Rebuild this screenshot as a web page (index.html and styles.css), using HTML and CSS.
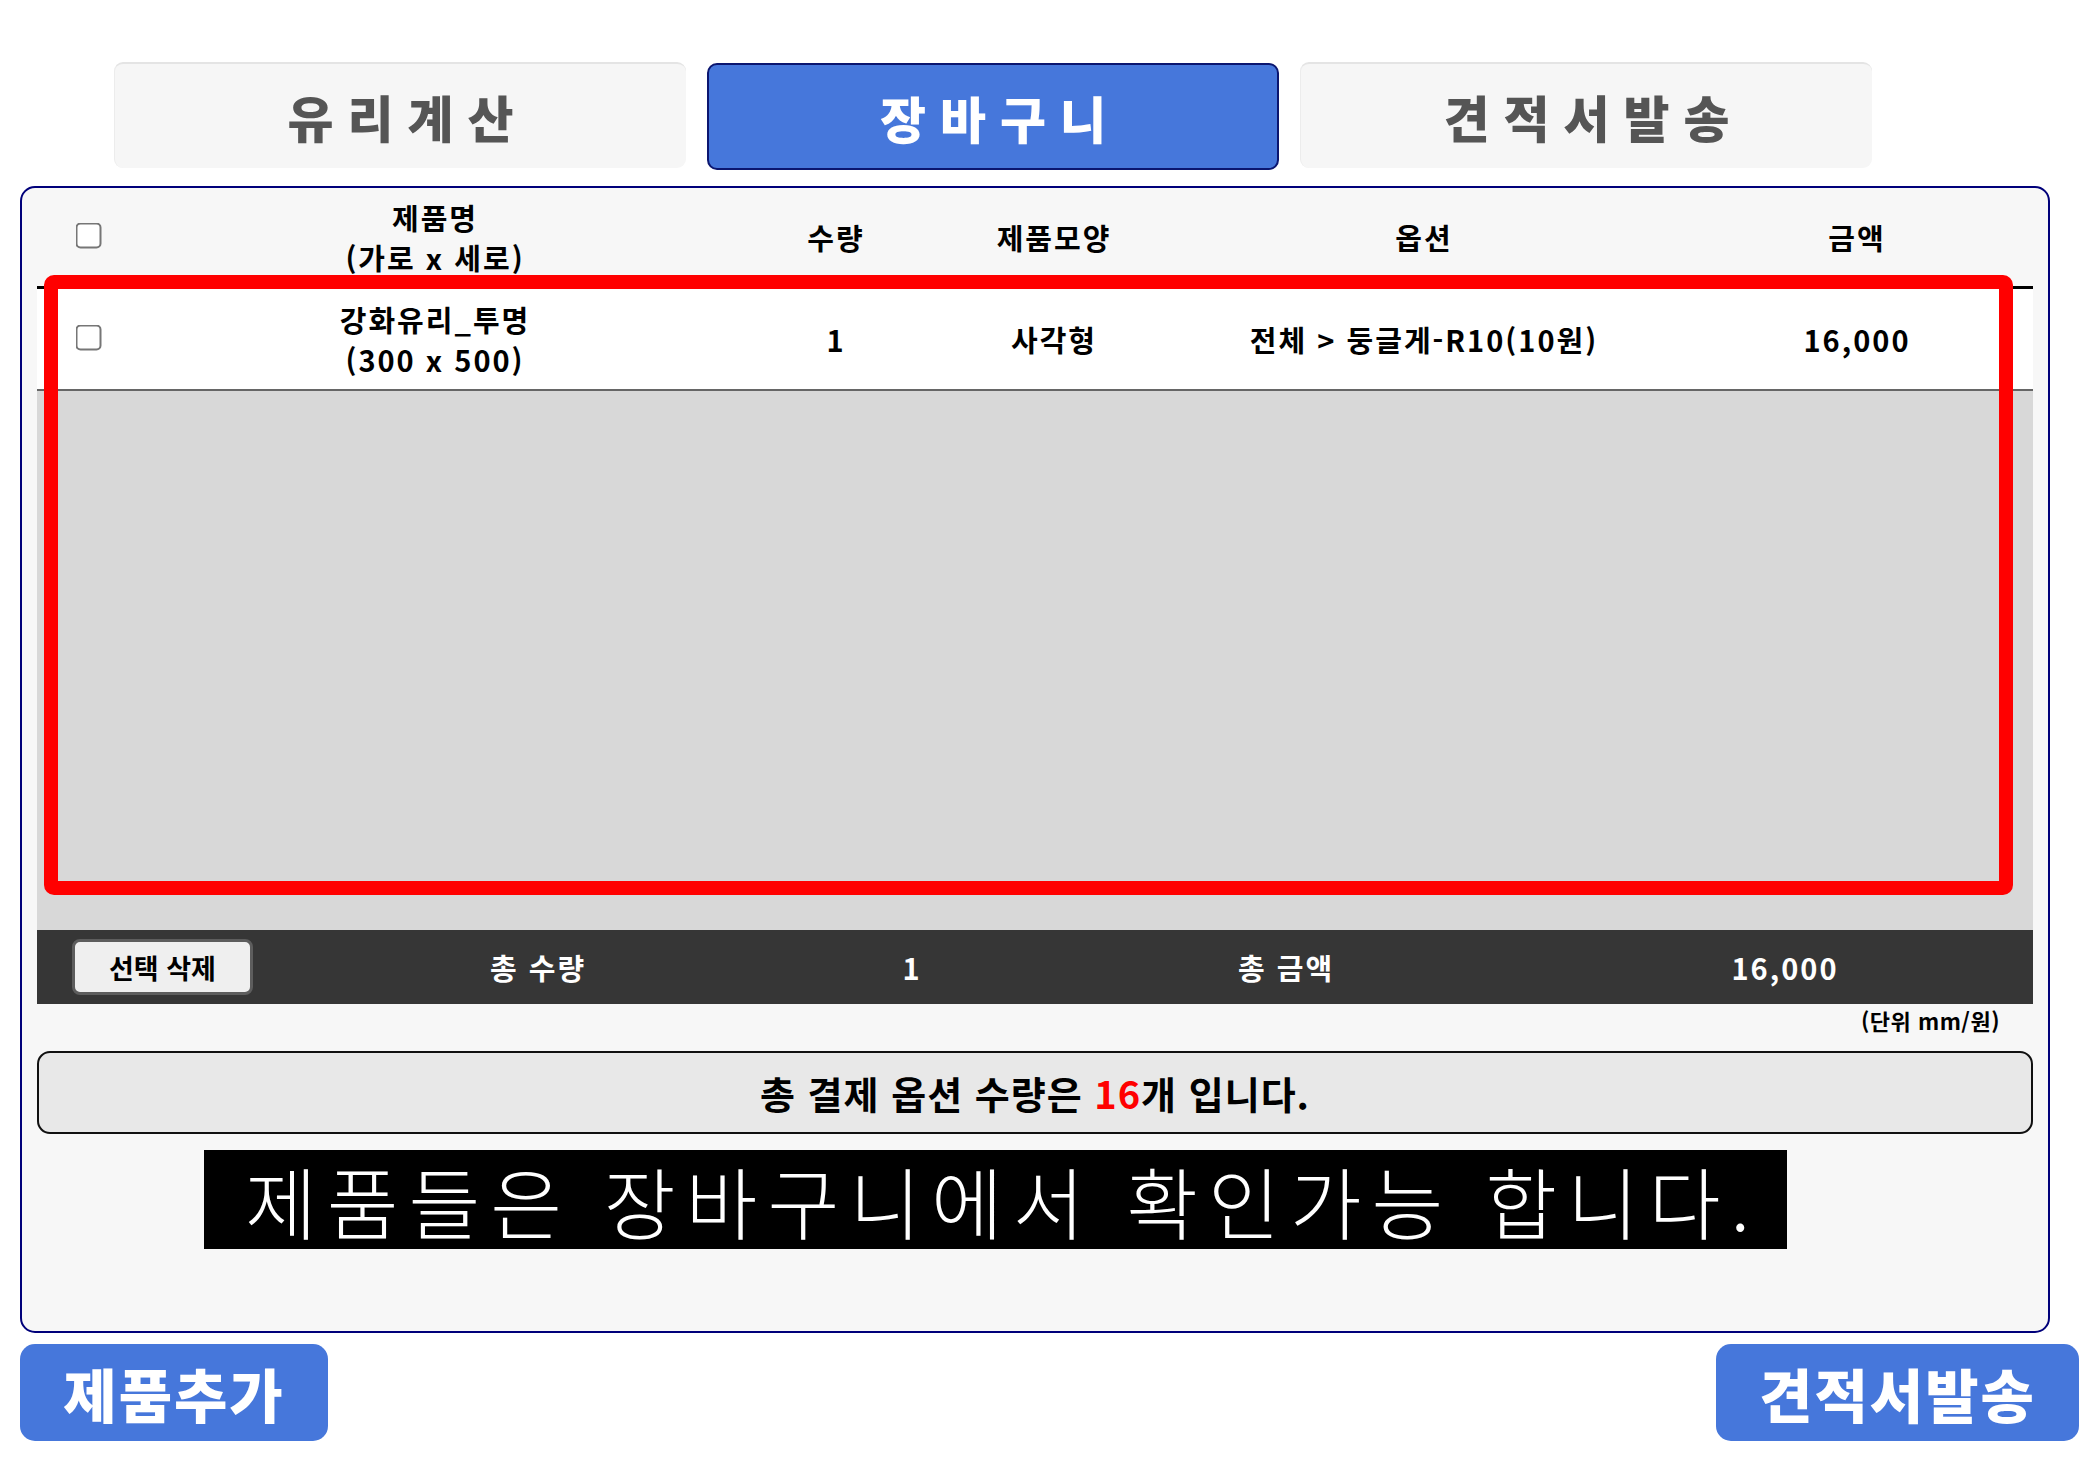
FILE: index.html
```html
<!DOCTYPE html>
<html lang="ko">
<head>
  <meta charset="UTF-8">
  <meta name="viewport" content="width=device-width, initial-scale=1.0">
  <title>장바구니</title>
  <link rel="stylesheet" href="styles.css">
</head>
<body>
  <div class="wrap">
    <!-- Tabs -->
    <nav class="tabs">
      <a class="tab">유리계산</a>
      <a class="tab active">장바구니</a>
      <a class="tab">견적서발송</a>
    </nav>

    <!-- Cart Panel -->
    <section class="panel">
      <div class="cart">
        <div class="cart-head">
          <div class="cell check"><input type="checkbox"></div>
          <div class="cell"><span class="line">제품명</span><span class="line">(가로 x 세로)</span></div>
          <div class="cell">수량</div>
          <div class="cell">제품모양</div>
          <div class="cell">옵션</div>
          <div class="cell">금액</div>
        </div>
        <div class="cart-row">
          <div class="cell check"><input type="checkbox"></div>
          <div class="cell"><span class="line">강화유리_투명</span><span class="line">(300 x 500)</span></div>
          <div class="cell">1</div>
          <div class="cell">사각형</div>
          <div class="cell">전체 &gt; 둥글게-R10(10원)</div>
          <div class="cell">16,000</div>
        </div>
        <div class="cart-empty"></div>
        <div class="cart-total">
          <div class="cell left"><button class="del-btn">선택 삭제</button></div>
          <div class="cell">총 수량</div>
          <div class="cell">1</div>
          <div class="cell">총 금액</div>
          <div class="cell">16,000</div>
        </div>
        <div class="highlight"></div>
      </div>
      <p class="unit">(단위 mm/원)</p>
      <div class="notice"><span>총 결제 옵션 수량은 <span class="red">16</span>개 입니다.</span></div>
      <div class="banner"><span>제품들은 장바구니에서 확인가능 합니다.</span></div>
    </section>

    <!-- Bottom Actions -->
    <div class="actions">
      <button class="big-btn">제품추가</button>
      <button class="big-btn wide">견적서발송</button>
    </div>
  </div>
</body>
</html>
```

FILE: styles.css
```css
/* Global */
body {
  margin: 0;
  background: #fff;
  font-family: "Noto Sans CJK KR", "Noto Sans", sans-serif;
  color: #000;
}
.wrap {
  width: 2059px;
  padding: 62px 0 0 20px;
}

/* Tabs */
.tabs {
  display: flex;
  gap: 21px;
  margin-left: 94px;
}
.tab {
  width: 572px;
  height: 106px;
  box-sizing: border-box;
  display: flex;
  align-items: center;
  justify-content: center;
  padding-left: 14px;
  background: #f6f6f6;
  border-top: 2px solid #e4e4e4;
  border-left: 1px solid #ececec;
  border-radius: 9px;
  font-size: 50px;
  font-weight: 900;
  letter-spacing: 14px;
  color: #555;
}
.tab.active {
  height: 107px;
  margin-top: 1px;
  background: #4677db;
  border: 2px solid #0b1670;
  border-radius: 10px;
  color: #fff;
}

/* Panel */
.panel {
  width: 2030px;
  height: 1147px;
  box-sizing: border-box;
  margin-top: 16px;
  padding: 0 15px;
  background: #f7f7f7;
  border: 2px solid #00007a;
  border-radius: 15px;
}
.cart {
  position: relative;
  font-weight: 700;
  font-size: 29px;
  letter-spacing: 2px;
}
.cart-head,
.cart-row {
  display: grid;
  grid-template-columns: 102px 592px 210px 226px 514px 1fr;
  align-items: center;
  text-align: center;
}
.cart-head {
  height: 98px;
  border-bottom: 3px solid #000;
}
.cart-row {
  height: 100px;
  background: #fff;
  border-bottom: 2px solid #666;
}
.cart .line {
  display: block;
  line-height: 40px;
}
.cart .check {
  display: flex;
  justify-content: center;
  align-items: center;
  padding-bottom: 4px;
}
.cart input[type="checkbox"] {
  transform: scale(2);
  margin: 0;
  accent-color: #4677db;
}
.cart-empty {
  height: 539px;
  background: #d8d8d8;
}
.cart-total {
  display: grid;
  grid-template-columns: 250px 502px 246px 502px 1fr;
  align-items: center;
  height: 74px;
  background: #363636;
  color: #fff;
  text-align: center;
}
.cart-total .left { text-align: left; padding-left: 35px; }
.del-btn {
  width: 181px;
  height: 56px;
  background: #efefef;
  border: 3px solid #5d5d5d;
  border-radius: 8px;
  font-family: inherit;
  font-size: 27px;
  font-weight: 700;
  color: #000;
}

/* Red marker over the list */
.highlight {
  position: absolute;
  left: 7px;
  top: 87px;
  width: 1969px;
  height: 620px;
  box-sizing: border-box;
  border: 14px solid #ff0000;
  border-radius: 10px;
}

.unit {
  margin: 0;
  height: 32px;
  line-height: 32px;
  text-align: right;
  padding-right: 33px;
  font-size: 22px;
  font-weight: 700;
  letter-spacing: 0.5px;
}
.notice {
  margin-top: 15px;
  height: 83px;
  box-sizing: border-box;
  display: flex;
  align-items: center;
  justify-content: center;
  background: #e8e8e8;
  border: 2px solid #111;
  border-radius: 13px;
  font-size: 38px;
  font-weight: 700;
  letter-spacing: 1px;
}
.red { color: #ff0000; }
.banner {
  margin: 16px 0 0 167px;
  width: 1583px;
  height: 99px;
  box-sizing: border-box;
  padding-left: 14px;
  display: flex;
  align-items: center;
  justify-content: center;
  background: #000;
  color: #fff;
  font-size: 78px;
  font-weight: 300;
  letter-spacing: 10px;
}

/* Bottom actions */
.actions {
  display: flex;
  justify-content: space-between;
  margin-top: 11px;
}
.big-btn {
  width: 308px;
  height: 97px;
  background: #4677db;
  border: none;
  border-radius: 15px;
  color: #fff;
  font-family: inherit;
  font-size: 58px;
  font-weight: 900;
  letter-spacing: 2px;
}
.big-btn.wide { width: 363px; }
```
